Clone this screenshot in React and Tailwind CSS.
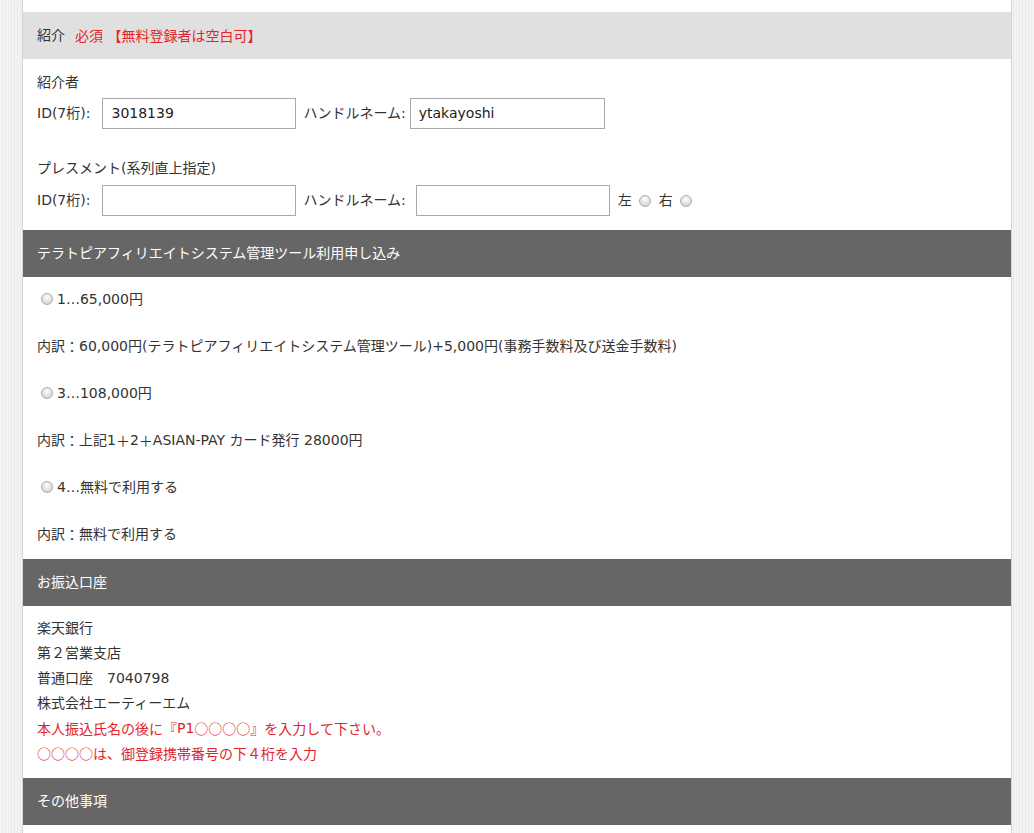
import React from 'react';

const font = { fontFamily: '"DejaVu Sans", "Noto Sans CJK JP", sans-serif' };
const cjk = { fontFamily: '"Noto Sans CJK JP", sans-serif' };

const Radio = () => (
  <span className="inline-block w-[12px] h-[12px] rounded-full border border-[#adadad] bg-[radial-gradient(circle_at_50%_35%,#ffffff_0%,#dedede_60%,#c4c4c4_100%)] align-middle shrink-0" />
);

const Input = ({ value, w }) => (
  <div className={`h-[31px] ${w} border border-[#a9a9a9] bg-white flex items-center px-[8px] text-[14px] text-[#222]`}>
    {value}
  </div>
);

const DarkHeader = ({ children }) => (
  <div className="h-[47px] bg-[#666666] text-white text-[14px] flex items-center px-[14px]">{children}</div>
);

const Line = ({ children, className = '' }) => (
  <div className={`h-[20px] flex items-center whitespace-nowrap ${className}`}>{children}</div>
);

const App = () => {
  return (
    <div className="min-h-[833px] w-[1034px] bg-[#efefef] bg-[repeating-linear-gradient(90deg,#f3f3f3_0px,#f3f3f3_2px,#ebebeb_2px,#ebebeb_3px)]" style={font}>
      <div className="ml-[22px] w-[990px] min-h-[833px] bg-white border-l border-r border-[#d4d4d4] text-[#333] text-[14px]">
        <div className="h-[12px]" />
        <div className="h-[47px] bg-[#e0e0e0] flex items-center px-[14px]">
          <span>紹介</span>
          <span className="ml-[10px] text-[#e0262b]">必須 <span style={cjk}>【無料登録者は空白可】</span></span>
        </div>

        <div className="px-[14px] pt-[13px] pb-[14px]">
          <Line>紹介者</Line>
          <div className="mt-[6px] h-[31px] flex items-center">
            <span className="mr-[12px]">ID(7桁):</span>
            <Input value="3018139" w="w-[194px]" />
            <span className="ml-[7px] mr-[4px]">ハンドルネーム:</span>
            <Input value="ytakayoshi" w="w-[195px]" />
          </div>
          <Line className="mt-[29px]">プレスメント(系列直上指定)</Line>
          <div className="mt-[7px] h-[31px] flex items-center">
            <span className="mr-[12px]">ID(7桁):</span>
            <Input value="" w="w-[194px]" />
            <span className="ml-[7px] mr-[10px]">ハンドルネーム:</span>
            <Input value="" w="w-[194px]" />
            <span className="ml-[8px] mr-[7px]">左</span>
            <Radio />
            <span className="ml-[8px] mr-[7px]">右</span>
            <Radio />
          </div>
        </div>

        <DarkHeader>テラトピアフィリエイトシステム管理ツール利用申し込み</DarkHeader>
        <div className="px-[14px] pt-[12px] pb-[15px] flex flex-col gap-[27px]">
          <Line className="pl-[4px]"><Radio /><span className="ml-[4px]">1…65,000円</span></Line>
          <Line>内訳<span style={cjk}>：</span>60,000円(テラトピアフィリエイトシステム管理ツール)+5,000円(事務手数料及び送金手数料)</Line>
          <Line className="pl-[4px]"><Radio /><span className="ml-[4px]">3…108,000円</span></Line>
          <Line>内訳<span style={cjk}>：</span>上記1<span style={cjk}>＋</span>2<span style={cjk}>＋</span>ASIAN-PAY カード発行 28000円</Line>
          <Line className="pl-[4px]"><Radio /><span className="ml-[4px]">4…無料で利用する</span></Line>
          <Line>内訳<span style={cjk}>：</span>無料で利用する</Line>
        </div>

        <DarkHeader>お振込口座</DarkHeader>
        <div className="px-[14px] pt-[10px] pb-[12px]">
          <div className="h-[25px] flex items-center">楽天銀行</div>
          <div className="h-[25px] flex items-center">第２営業支店</div>
          <div className="h-[25px] flex items-center whitespace-pre">普通口座　7040798</div>
          <div className="h-[25px] flex items-center">株式会社エーティーエム</div>
          <div className="h-[25px] flex items-center text-[#e0262b]" style={cjk}>本人振込氏名の後に『<span style={font}>P1</span>○○○○』を入力して下さい。</div>
          <div className="h-[25px] flex items-center text-[#e0262b]" style={cjk}>○○○○は、御登録携帯番号の下４桁を入力</div>
        </div>

        <DarkHeader>その他事項</DarkHeader>
      </div>
    </div>
  );
};

export default App;
